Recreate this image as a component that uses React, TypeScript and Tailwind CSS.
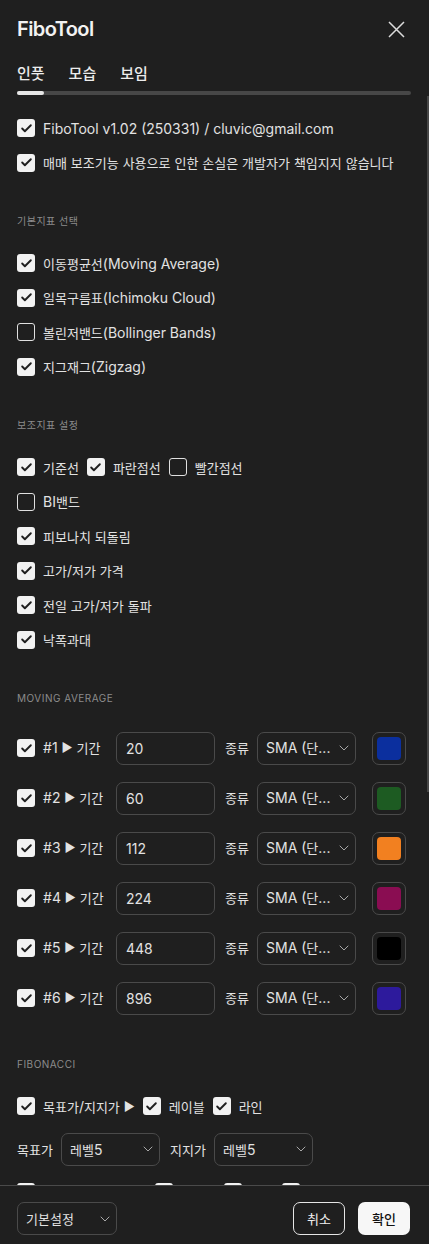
import { Check, ChevronDown } from "lucide-react";

const ko = (t: string) =>
  t.split(/([\u3131-\u318E\uAC00-\uD7A3]+)/).map((s, i) =>
    i % 2 ? (
      <span key={i} className="text-[13px]">
        {s}
      </span>
    ) : (
      s
    )
  );

function Box({ on = true }: { on?: boolean }) {
  return on ? (
    <span className="w-[18px] h-[18px] shrink-0 rounded-[3px] bg-[#f2f2f2] flex items-center justify-center">
      <Check size={13} strokeWidth={3.5} className="text-[#1f1f1f]" />
    </span>
  ) : (
    <span className="w-[18px] h-[18px] shrink-0 rounded-[3px] border-[1.5px] border-[#e0e0e0]" />
  );
}

function Item({ on = true, label }: { on?: boolean; label: string }) {
  return (
    <div className="flex items-center gap-2">
      <Box on={on} />
      <span className="whitespace-nowrap">{ko(label)}</span>
    </div>
  );
}

function Row({ on = true, label }: { on?: boolean; label: string }) {
  return (
    <div className="h-[34.5px] flex items-center">
      <Item on={on} label={label} />
    </div>
  );
}

function Section({ title }: { title: string }) {
  return (
    <div className="mt-[34px] mb-[18px] h-[14px] flex items-center text-[10px] text-[#8c8c8c] tracking-[0.5px]">
      {title}
    </div>
  );
}

function Select({ text, w = "w-[99px]" }: { text: string; w?: string }) {
  return (
    <div
      className={`${w} h-[33px] shrink-0 rounded-[7px] border border-[#4a4a4a] flex items-center pl-[8px] pr-[3px]`}
    >
      <span className="flex-1 whitespace-nowrap overflow-hidden">{ko(text)}</span>
      <ChevronDown size={16} strokeWidth={1.5} className="text-[#a8a8a8] shrink-0" />
    </div>
  );
}

const Tri = () => <span className="text-[12px] align-[1px]">►</span>;

const averages = [
  { n: 1, period: "20", color: "bg-[#0b2f9e]" },
  { n: 2, period: "60", color: "bg-[#1d5b22]" },
  { n: 3, period: "112", color: "bg-[#f28020]" },
  { n: 4, period: "224", color: "bg-[#8a0d52]" },
  { n: 5, period: "448", color: "bg-[#000000]" },
  { n: 6, period: "896", color: "bg-[#2d1a9c]" },
];

export default function App() {
  return (
    <div className="relative w-[429px] h-[1244px] overflow-hidden flex flex-col bg-[#1f1f1f] text-[#e2e2e2] text-[14px] font-['Inter','Noto_Sans_CJK_KR',sans-serif]">
      <div className="h-[58px] shrink-0 flex items-center justify-between pl-[17px] pr-[24px]">
        <h1 className="text-[20px] font-semibold text-[#f2f2f2] leading-none tracking-[-0.6px]">FiboTool</h1>
        <svg width="17" height="17" viewBox="0 0 17 17" className="text-[#dcdcdc]">
          <path d="M1 1 16 16M16 1 1 16" stroke="currentColor" strokeWidth="1.5" fill="none" />
        </svg>
      </div>

      <div className="shrink-0 pl-[17px] pr-[18px]">
        <div className="h-[33px] flex items-center gap-[24px] text-[15px] font-medium text-[#ececec]">
          <span>인풋</span>
          <span>모습</span>
          <span>보임</span>
        </div>
        <div className="h-[4px] rounded-full bg-[#474747]">
          <div className="w-[27px] h-full rounded-full bg-[#e6e6e6]" />
        </div>
      </div>

      <div className="flex-1 overflow-hidden pl-[17px] pr-[18px] pt-[16px]">
        <Row label="FiboTool v1.02 (250331) / cluvic@gmail.com" />
        <Row label="매매 보조기능 사용으로 인한 손실은 개발자가 책임지지 않습니다" />

        <Section title="기본지표 선택" />
        <Row label="이동평균선(Moving Average)" />
        <Row label="일목구름표(Ichimoku Cloud)" />
        <Row on={false} label="볼린저밴드(Bollinger Bands)" />
        <Row label="지그재그(Zigzag)" />

        <Section title="보조지표 설정" />
        <div className="h-[34.5px] flex items-center gap-2">
          <Item label="기준선" />
          <Item label="파란점선" />
          <Item on={false} label="빨간점선" />
        </div>
        <Row on={false} label="BI밴드" />
        <Row label="피보나치 되돌림" />
        <Row label="고가/저가 가격" />
        <Row label="전일 고가/저가 돌파" />
        <Row label="낙폭과대" />

        <Section title="MOVING AVERAGE" />
        {averages.map((a) => (
          <div key={a.n} className="h-[50px] flex items-center">
            <Box />
            <span className="ml-2 w-[73px] whitespace-nowrap">
              #{a.n} <Tri /> {ko("기간")}
            </span>
            <div className="w-[99px] h-[33px] shrink-0 rounded-[7px] border border-[#4a4a4a] flex items-center pl-[9px]">
              {a.period}
            </div>
            <span className="w-[42px] pl-[10px] whitespace-nowrap">{ko("종류")}</span>
            <Select text="SMA (단..." />
            <div className="ml-[16px] w-[34px] h-[33px] shrink-0 rounded-[7px] border border-[#4a4a4a] flex items-center justify-center">
              <div className={`w-[24px] h-[23px] rounded-[4px] ${a.color}`} />
            </div>
          </div>
        ))}

        <Section title="FIBONACCI" />
        <div className="h-[34.5px] flex items-center gap-2">
          <Box />
          <span className="whitespace-nowrap">
            {ko("목표가/지지가")} <Tri />
          </span>
          <Item label="레이블" />
          <Item label="라인" />
        </div>
        <div className="h-[51.5px] flex items-center">
          <span className="w-[44px] whitespace-nowrap">{ko("목표가")}</span>
          <Select text="레벨5" />
          <span className="w-[54px] pl-[10px] whitespace-nowrap">{ko("지지가")}</span>
          <Select text="레벨5" />
        </div>
        <div className="h-[34.5px] flex items-center gap-2">
          <Item label="피보나치 가격 표시" />
          <Item label="추세선" />
          <Item label="중간" />
          <Item label="선택영역" />
          <span className="ml-[6px] w-[11px] h-[11px] rounded-full bg-[#555]" />
        </div>
      </div>

      <div className="h-[59px] shrink-0 border-t border-[#4a4a4a] flex items-start justify-between pt-[16px] pl-[17px] pr-[19px]">
        <Select text="기본설정" w="w-[100px]" />
        <div className="flex gap-[13px]">
          <button className="w-[52px] h-[33px] rounded-[7px] border border-[#e6e6e6] text-[#f0f0f0]">
            {ko("취소")}
          </button>
          <button className="w-[52px] h-[33px] rounded-[7px] bg-[#f7f7f7] text-[#111] font-medium">
            {ko("확인")}
          </button>
        </div>
      </div>

      <div className="absolute right-0 top-[96px] w-[2px] h-[696px] bg-[#474747]" />
    </div>
  );
}
